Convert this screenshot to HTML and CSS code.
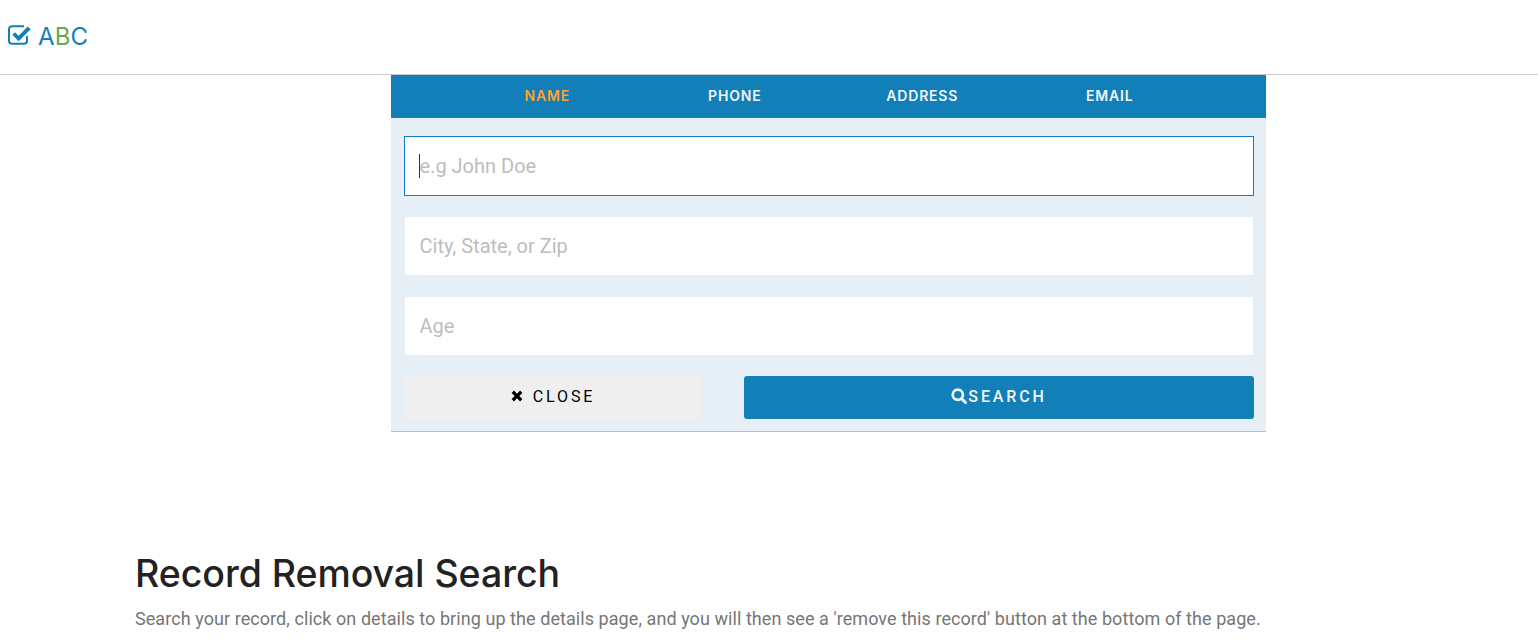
FILE: index.html
```html
<!DOCTYPE html>
<html lang="en">
<head>
<meta charset="utf-8">
<title>ABC</title>
<link rel="stylesheet" href="styles.css">
</head>
<body>
<header class="topbar">
  <a class="logo" href="#">
    <svg class="logo-icon" viewBox="0 0 24 20" width="24" height="20" aria-hidden="true">
      <path d="M19 11v4.800a3 3 0 0 1-3 3H4a3 3 0 0 1-3-3V4.200a3 3 0 0 1 3-3h12" fill="none" stroke="#137fb8" stroke-width="2"/>
      <path d="M4.400 9.800 7 7.200l3.600 3.600L19.800 1.600 22.600 4.300 10.600 16.300z" fill="#137fb8"/>
    </svg>
    <span class="logo-text">A<span class="logo-b">B</span>C</span>
  </a>
</header>
<main>
  <section class="panel">
    <nav class="tabs">
      <a class="tab active" href="#">NAME</a>
      <a class="tab" href="#">PHONE</a>
      <a class="tab" href="#">ADDRESS</a>
      <a class="tab" href="#">EMAIL</a>
    </nav>
    <form class="form">
      <div class="field-focus">
        <span class="caret"></span>
        <input class="field" type="text" placeholder="e.g John Doe">
      </div>
      <input class="field" type="text" placeholder="City, State, or Zip">
      <input class="field" type="text" placeholder="Age">
      <div class="actions">
        <button class="btn btn-close" type="button">
          <svg viewBox="0 0 12 12" width="12" height="12" aria-hidden="true"><path d="M2.900.6 6 3.700 9.100.6l2.300 2.300L8.300 6l3.100 3.100-2.300 2.300L6 8.300l-3.100 3.100L.6 9.100 3.700 6 .6 2.900z" fill="#000"/></svg>
          <span>CLOSE</span>
        </button>
        <button class="btn btn-search" type="button">
          <svg viewBox="0 0 16 16" width="16" height="16" aria-hidden="true"><circle cx="6.800" cy="6.800" r="5.100" fill="none" stroke="#f2f6f9" stroke-width="2.700"/><path d="m10.700 10.700 3.800 3.800" stroke="#f2f6f9" stroke-width="3" stroke-linecap="round"/></svg>
          <span>SEARCH</span>
        </button>
      </div>
    </form>
  </section>
  <section class="intro">
    <h1>Record Removal Search</h1>
    <p>Search your record, click on details to bring up the details page, and you will then see a 'remove this record' button at the bottom of the page.</p>
  </section>
</main>
</body>
</html>
```
FILE: styles.css
```css
* { box-sizing: border-box; }
html, body { margin: 0; padding: 0; background: #fff; overflow: hidden; }
body { font-family: Roboto, "Liberation Sans", sans-serif; color: #222; }
.topbar {
  height: 75px;
  border-bottom: 1px solid #ccc;
  padding: 0 8px;
  display: flex;
  align-items: center;
}
.logo { display: flex; align-items: center; gap: 6px; text-decoration: none; margin-top: -1px; }
.logo-icon { display: block; margin-top: -3px; }
.logo-text { font-family: Inter, sans-serif; font-size: 24px; letter-spacing: 0.1px; color: #137fb8; line-height: 30px; }
.logo-b { color: #6aa84f; }
.panel {
  width: 875px;
  margin-left: 391px;
  background: #e6eff5;
  border-bottom: 1px solid #b5c0c6;
}
.tabs {
  height: 43px;
  background: #137fb8;
  display: flex;
  justify-content: center;
  align-items: center;
  padding-bottom: 3px;
}
.tab {
  width: 187.5px;
  text-align: center;
  font-family: Inter, sans-serif;
  font-size: 14px;
  font-weight: 600;
  letter-spacing: 0.8px;
  color: #eef4f8;
  text-decoration: none;
}
.tab.active { color: #fba42e; }
.form {
  padding: 18px 12px 12px 13px;
  display: flex;
  flex-direction: column;
  align-items: stretch;
  gap: 21.33px;
}
.field-focus { position: relative; display: flex; }
.caret {
  position: absolute;
  left: 15px;
  top: 18px;
  width: 1px;
  height: 24px;
  background: #333;
}
.field {
  display: block;
  width: calc(100% - 2px);
  margin: 0 1px;
  height: 58px;
  border: 0;
  outline: 0;
  background: #fff;
  padding: 0 14.500px;
  font-family: Roboto, sans-serif;
  font-size: 20px;
  color: #333;
}
.field::placeholder { color: #bdbdbd; opacity: 1; }
.field-focus .field {
  width: 100%;
  margin: 0;
  height: 60px;
  border: 1px solid #137fb8;
}
.actions { display: flex; justify-content: space-between; }
.btn {
  height: 43px;
  border: 0;
  padding: 0 0 2px;
  display: flex;
  align-items: center;
  justify-content: center;
  font-family: Roboto, sans-serif;
  font-size: 16px;
  letter-spacing: 2.850px;
}
.btn-close { width: 298px; background: #efefef; color: #000; gap: 10px; font-weight: 400; }
.btn-search { width: 510px; background: #137fb8; color: #f2f6f9; border-radius: 3px; gap: 1px; font-weight: 500; }
.intro { padding: 0 135px; margin-top: 117px; }
.intro h1 {
  margin: 0;
  font-family: Inter, sans-serif;
  font-size: 37.5px;
  font-weight: 500;
  letter-spacing: -0.05px;
  line-height: 50px;
  color: #222;
}
.intro p {
  margin: 7px 0 0;
  font-size: 18px;
  letter-spacing: 0.065px;
  line-height: 26px;
  color: #767676;
}
```
